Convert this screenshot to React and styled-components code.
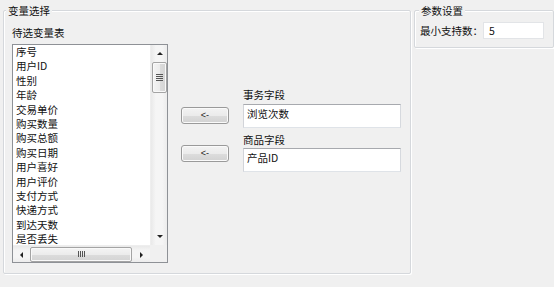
import React from 'react';
import styled, { createGlobalStyle } from 'styled-components';

const Global = createGlobalStyle`
  html, body { margin: 0; padding: 0; background: #f0f0f0; }
  body {
    font-family: "Microsoft YaHei", "Noto Sans CJK SC", sans-serif;
    font-size: 10.5px;
    color: #111;
    overflow: hidden;
  }
  #root { width: 554px; height: 287px; overflow: hidden; }
`;

const Page = styled.div`
  display: flex;
  align-items: flex-start;
  gap: 3px;
  padding: 10px 0 0 3px;
  box-sizing: border-box;
  width: 554px;
  height: 287px;
`;

const Group = styled.section`
  position: relative;
  box-sizing: border-box;
  flex: none;
  width: ${(p) => p.$w}px;
  height: ${(p) => p.$h}px;
  border: 1px solid #d5d8dc;
  border-radius: 2px;
  box-shadow: inset 1px 1px 0 #fff, 1px 1px 0 #fff;
`;

const GroupTitle = styled.span`
  position: absolute;
  top: -7px;
  left: ${(p) => p.$x}px;
  padding: 0 2px;
  background: #f0f0f0;
  line-height: 14px;
  white-space: nowrap;
`;

const GroupBody = styled.div`
  display: flex;
  align-items: flex-start;
  padding: ${(p) => p.$pad};
`;

const Column = styled.div`
  display: flex;
  flex-direction: column;
  align-items: flex-start;
  padding-top: ${(p) => p.$top}px;
  gap: ${(p) => p.$gap || 0}px;
  margin-right: ${(p) => p.$mr || 0}px;
`;

const Label = styled.div`
  line-height: 14px;
  white-space: nowrap;
  margin-top: ${(p) => p.$mt || 0}px;
`;

const ListBox = styled.div`
  box-sizing: border-box;
  width: 156px;
  height: 219px;
  margin-top: 4px;
  border: 1px solid #8e9196;
  background: #fff;
  display: grid;
  grid-template-columns: 1fr 17px;
  grid-template-rows: 1fr 17px;
  overflow: hidden;
`;

const Items = styled.ul`
  margin: 0;
  padding: 0 0 0 3px;
  list-style: none;
  overflow: hidden;
`;

const Item = styled.li`
  height: 14.4px;
  line-height: 14.4px;
  white-space: nowrap;
`;

const VScroll = styled.div`
  display: flex;
  flex-direction: column;
  background: linear-gradient(to right, #e9e9e9, #f5f5f5 30%, #f5f5f5 70%, #ececec);
  border-left: 1px solid #eeeeee;
`;

const HScroll = styled.div`
  display: flex;
  background: linear-gradient(#e9e9e9, #f5f5f5 30%, #f5f5f5 70%, #ececec);
  border-top: 1px solid #eeeeee;
`;

const Corner = styled.div`
  background: #f0f0f0;
`;

const ArrowCell = styled.div`
  flex: none;
  width: 17px;
  height: 17px;
  display: flex;
  align-items: center;
  justify-content: center;
`;

const Tri = styled.span`
  width: 0;
  height: 0;
  border-style: solid;
  ${(p) =>
    p.$dir === 'up'
      ? 'border-width: 0 3px 3px 3px; border-color: transparent transparent #222 transparent;'
      : p.$dir === 'down'
      ? 'border-width: 3px 3px 0 3px; border-color: #222 transparent transparent transparent;'
      : p.$dir === 'left'
      ? 'border-width: 3px 3px 3px 0; border-color: transparent #222 transparent transparent;'
      : 'border-width: 3px 0 3px 3px; border-color: transparent transparent transparent #222;'}
`;

const Track = styled.div`
  flex: 1;
  display: flex;
  flex-direction: ${(p) => (p.$v ? 'column' : 'row')};
  align-items: center;
`;

const Thumb = styled.div`
  box-sizing: border-box;
  flex: none;
  border: 1px solid #a4a4a4;
  border-radius: 2px;
  display: flex;
  align-items: center;
  justify-content: center;
  ${(p) =>
    p.$v
      ? `width: 15px; height: 31px;
         background: linear-gradient(to right, #f4f4f4, #ececec 50%, #dcdcdc 51%, #d4d4d4);`
      : `height: 15px; width: 102px;
         background: linear-gradient(#f4f4f4, #ececec 50%, #dcdcdc 51%, #d4d4d4);`}
  box-shadow: inset 0 0 0 1px #f9f9f9;
`;

const Grip = styled.div`
  display: flex;
  flex-direction: ${(p) => (p.$v ? 'column' : 'row')};
  gap: 1px;
  & > i {
    display: block;
    background: #555;
    ${(p) => (p.$v ? 'width: 7px; height: 1px;' : 'width: 1px; height: 6px;')}
  }
`;

const PushButton = styled.button`
  box-sizing: border-box;
  width: 48px;
  height: 17px;
  padding: 0;
  border: 1px solid #9a9a9a;
  border-radius: 3px;
  background: linear-gradient(#f3f3f3 0%, #ebebeb 50%, #dddddd 51%, #d2d2d2 100%);
  box-shadow: inset 0 0 0 1px #fafafa;
  font: 9px "Liberation Sans", sans-serif;
  color: #222;
  line-height: 13px;
`;

const Field = styled.div`
  box-sizing: border-box;
  width: 158px;
  height: ${(p) => p.$h}px;
  margin-top: ${(p) => p.$mt || 0}px;
  background: #fff;
  border: 1px solid;
  border-color: #a7a9ae #d6d9de #dfe3e8 #d2d4d9;
  padding: 2px 0 0 3px;
  line-height: 14px;
  white-space: nowrap;
`;

const ParamRow = styled.div`
  display: flex;
  align-items: center;
`;

const SmallInput = styled.div`
  box-sizing: border-box;
  width: 61px;
  height: 17px;
  background: #fff;
  border: 1px solid #e2e4e7;
  padding-left: 5px;
  line-height: 15px;
`;

const items = [
  '序号', '用户ID', '性别', '年龄', '交易单价', '购买数量', '购买总额',
  '购买日期', '用户喜好', '用户评价', '支付方式', '快递方式', '到达天数', '是否丢失',
];

export default function App() {
  return (
    <>
      <Global />
      <Page>
        <Group $w={408} $h={264}>
          <GroupTitle $x={2}>变量选择</GroupTitle>
          <GroupBody $pad="0 0 0 8px">
            <Column $top={15} $mr={13}>
              <Label>待选变量表</Label>
              <ListBox>
                <Items>
                  {items.map((t) => (
                    <Item key={t}>{t}</Item>
                  ))}
                </Items>
                <VScroll>
                  <ArrowCell><Tri $dir="up" /></ArrowCell>
                  <Track $v>
                    <Thumb $v>
                      <Grip $v><i /><i /><i /><i /></Grip>
                    </Thumb>
                  </Track>
                  <ArrowCell><Tri $dir="down" /></ArrowCell>
                </VScroll>
                <HScroll>
                  <ArrowCell><Tri $dir="left" /></ArrowCell>
                  <Track>
                    <Thumb>
                      <Grip><i /><i /><i /><i /></Grip>
                    </Thumb>
                  </Track>
                  <ArrowCell><Tri $dir="right" /></ArrowCell>
                </HScroll>
                <Corner />
              </ListBox>
            </Column>
            <Column $top={96} $gap={21} $mr={14}>
              <PushButton>&lt;-</PushButton>
              <PushButton>&lt;-</PushButton>
            </Column>
            <Column $top={77}>
              <Label>事务字段</Label>
              <Field $h={24} $mt={2}>浏览次数</Field>
              <Label $mt={5}>商品字段</Label>
              <Field $h={24} $mt={1}>产品ID</Field>
            </Column>
          </GroupBody>
        </Group>
        <Group $w={140} $h={38}>
          <GroupTitle $x={4}>参数设置</GroupTitle>
          <GroupBody $pad="11px 0 0 5px">
            <ParamRow>
              <Label>最小支持数：</Label>
              <SmallInput>5</SmallInput>
            </ParamRow>
          </GroupBody>
        </Group>
      </Page>
    </>
  );
}
